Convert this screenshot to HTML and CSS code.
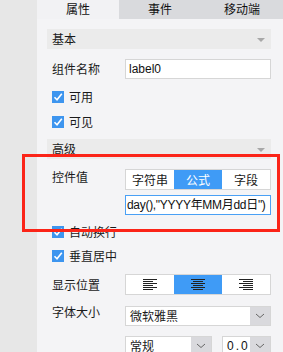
FILE: index.html
```html
<!DOCTYPE html>
<html>
<head>
<meta charset="utf-8">
<link rel="stylesheet" href="styles.css">
</head>
<body>
<div class="app">
  <div class="strip"></div>
  <div class="panel">
    <div class="tabs">
      <div class="tab active">属性</div>
      <div class="tab">事件</div>
      <div class="tab">移动端</div>
    </div>
    <div class="content">
      <div class="section">基本<span class="tri"></span></div>
      <div class="row r-name">
        <div class="label">组件名称</div>
        <div class="input">label0</div>
      </div>
      <div class="check c1"><span class="box"><svg width="12" height="12" viewBox="0 0 12 12"><path d="M2.5 6.2 L5 8.7 L9.8 2.8" fill="none" stroke="#fff" stroke-width="1.6"/></svg></span>可用</div>
      <div class="check c2"><span class="box"><svg width="12" height="12" viewBox="0 0 12 12"><path d="M2.5 6.2 L5 8.7 L9.8 2.8" fill="none" stroke="#fff" stroke-width="1.6"/></svg></span>可见</div>
      <div class="section s2">高级<span class="tri"></span></div>
      <div class="row r-val">
        <div class="label top">控件值</div>
        <div class="stack">
          <div class="seg">
            <div class="opt">字符串</div>
            <div class="opt on">公式</div>
            <div class="opt">字段</div>
          </div>
          <div class="input formula"><span>day(),"YYYY年MM月dd日")</span></div>
        </div>
      </div>
      <div class="check c3"><span class="box"><svg width="12" height="12" viewBox="0 0 12 12"><path d="M2.5 6.2 L5 8.7 L9.8 2.8" fill="none" stroke="#fff" stroke-width="1.6"/></svg></span>自动换行</div>
      <div class="check c4"><span class="box"><svg width="12" height="12" viewBox="0 0 12 12"><path d="M2.5 6.2 L5 8.7 L9.8 2.8" fill="none" stroke="#fff" stroke-width="1.6"/></svg></span>垂直居中</div>
      <div class="row r-pos">
        <div class="label">显示位置</div>
        <div class="seg">
          <div class="opt"><svg width="14" height="11" viewBox="0 0 14 11"><g stroke="#222" stroke-width="1"><path d="M0 0.5H14M0 2.5H10M0 4.5H14M0 6.5H10M0 8.5H14M0 10.5H10"/></g></svg></div>
          <div class="opt on"><svg width="14" height="11" viewBox="0 0 14 11"><g stroke="#222" stroke-width="1"><path d="M0 0.5H14M2 2.5H12M0 4.5H14M2 6.5H12M0 8.5H14M2 10.5H12"/></g></svg></div>
          <div class="opt"><svg width="14" height="11" viewBox="0 0 14 11"><g stroke="#222" stroke-width="1"><path d="M0 0.5H14M4 2.5H14M0 4.5H14M4 6.5H14M0 8.5H14M4 10.5H14"/></g></svg></div>
        </div>
      </div>
      <div class="row r-font">
        <div class="label top2">字体大小</div>
        <div class="stack2">
          <div class="select"><span class="sv">微软雅黑</span><span class="arr"><svg width="10" height="6" viewBox="0 0 10 6"><path d="M1 1L5 4.5L9 1" fill="none" stroke="#666" stroke-width="1"/></svg></span></div>
          <div class="pair">
            <div class="select w1"><span class="sv">常规</span><span class="arr"><svg width="10" height="6" viewBox="0 0 10 6"><path d="M1 1L5 4.5L9 1" fill="none" stroke="#666" stroke-width="1"/></svg></span></div>
            <div class="select w2"><span class="sv num">0.0</span><span class="arr"><svg width="10" height="6" viewBox="0 0 10 6"><path d="M1 1L5 4.5L9 1" fill="none" stroke="#666" stroke-width="1"/></svg></span></div>
          </div>
        </div>
      </div>
    </div>
  </div>
  <div class="redbox"></div>
</div>
</body>
</html>
```

FILE: styles.css
```css
* { box-sizing: border-box; }
html, body { margin: 0; padding: 0; }
body {
  width: 283px; height: 352px; overflow: hidden;
  font-family: "Noto Sans CJK SC", "Noto Sans", sans-serif;
  font-size: 12px; color: #1a1a1a;
}
.app { position: relative; display: flex; width: 283px; height: 352px; }
.strip { width: 37px; background: #e7e7e7; flex: none; }
.panel { flex: 1; background: #f4f4f6; }
.tabs { display: flex; height: 19px; background: #d9dadd; }
.tab { width: 82px; text-align: center; line-height: 17px; font-size: 12px; color: #111; }
.tab.active { background: #f2f2f4; }
.content { padding: 10px 12px 0 10px; }
.section {
  position: relative; height: 20px; line-height: 19px; padding-left: 5px;
  background: #ebebeb; font-size: 12px;
}
.tri {
  position: absolute; right: 6px; top: 9px; width: 0; height: 0;
  border-left: 4px solid transparent; border-right: 4px solid transparent;
  border-top: 4px solid #a8a8a8;
}
.row { display: flex; padding-left: 5px; }
.label { width: 73px; flex: none; line-height: 20px; }
.input {
  width: 146px; height: 20px; background: #fff; border: 1px solid #d6d6d6;
  padding-left: 3px; line-height: 18px; font-family: "Liberation Sans", sans-serif; font-size: 12px;
  color: #111;
}
.r-name { margin-top: 10px; }
.check { display: flex; align-items: center; padding-left: 5px; height: 20px; line-height: 20px; }
.check .box {
  width: 12px; height: 12px; background: #3d95ef; margin-right: 5px; display: flex;
}
.c1 { margin-top: 8px; }
.c2 { margin-top: 5px; }
.s2 { margin-top: 7px; }
.r-val { margin-top: 10px; }
.label.top { line-height: 16px; padding-top: 0; }
.stack { display: flex; flex-direction: column; gap: 5px; }
.seg {
  display: flex; width: 146px; height: 21px; border: 1px solid #d6d6d6; background: #fff;
}
.opt { flex: 1; display: flex; align-items: center; justify-content: center; font-size: 12px; }
.opt.on { background: #3f9bf6; color: #fff; }
.formula {
  border-color: #4aa0f5; padding: 0 0 0 1px; overflow: hidden; white-space: nowrap;
}
.formula span {
  font-family: "Liberation Sans", "Noto Sans CJK SC", sans-serif; font-size: 12px;
  letter-spacing: -0.3px;
}
.c3 { margin-top: 7px; }
.c4 { margin-top: 4px; }
.r-pos { margin-top: 8px; }
.r-pos .label { line-height: 21px; }
.r-font { margin-top: 11px; }
.label.top2 { line-height: 12px; padding-top: 0; }
.stack2 { display: flex; flex-direction: column; gap: 10px; }
.select {
  display: flex; width: 146px; height: 20px; background: #fff; border: 1px solid #d6d6d6;
}
.sv { flex: 1; padding-left: 4px; line-height: 18px; }
.arr { width: 20px; background: #d9d9dd; display: flex; align-items: center; justify-content: center; }
.pair { display: flex; gap: 10px; }
.select.w1 { width: 87px; }
.select.w2 { width: 49px; }
.num { font-family: "Liberation Sans", sans-serif; letter-spacing: 2px; color: #111; }
.redbox {
  position: absolute; left: 22px; top: 154px; width: 258px; height: 78px;
  border: 3px solid #fb2418; pointer-events: none;
}
```
